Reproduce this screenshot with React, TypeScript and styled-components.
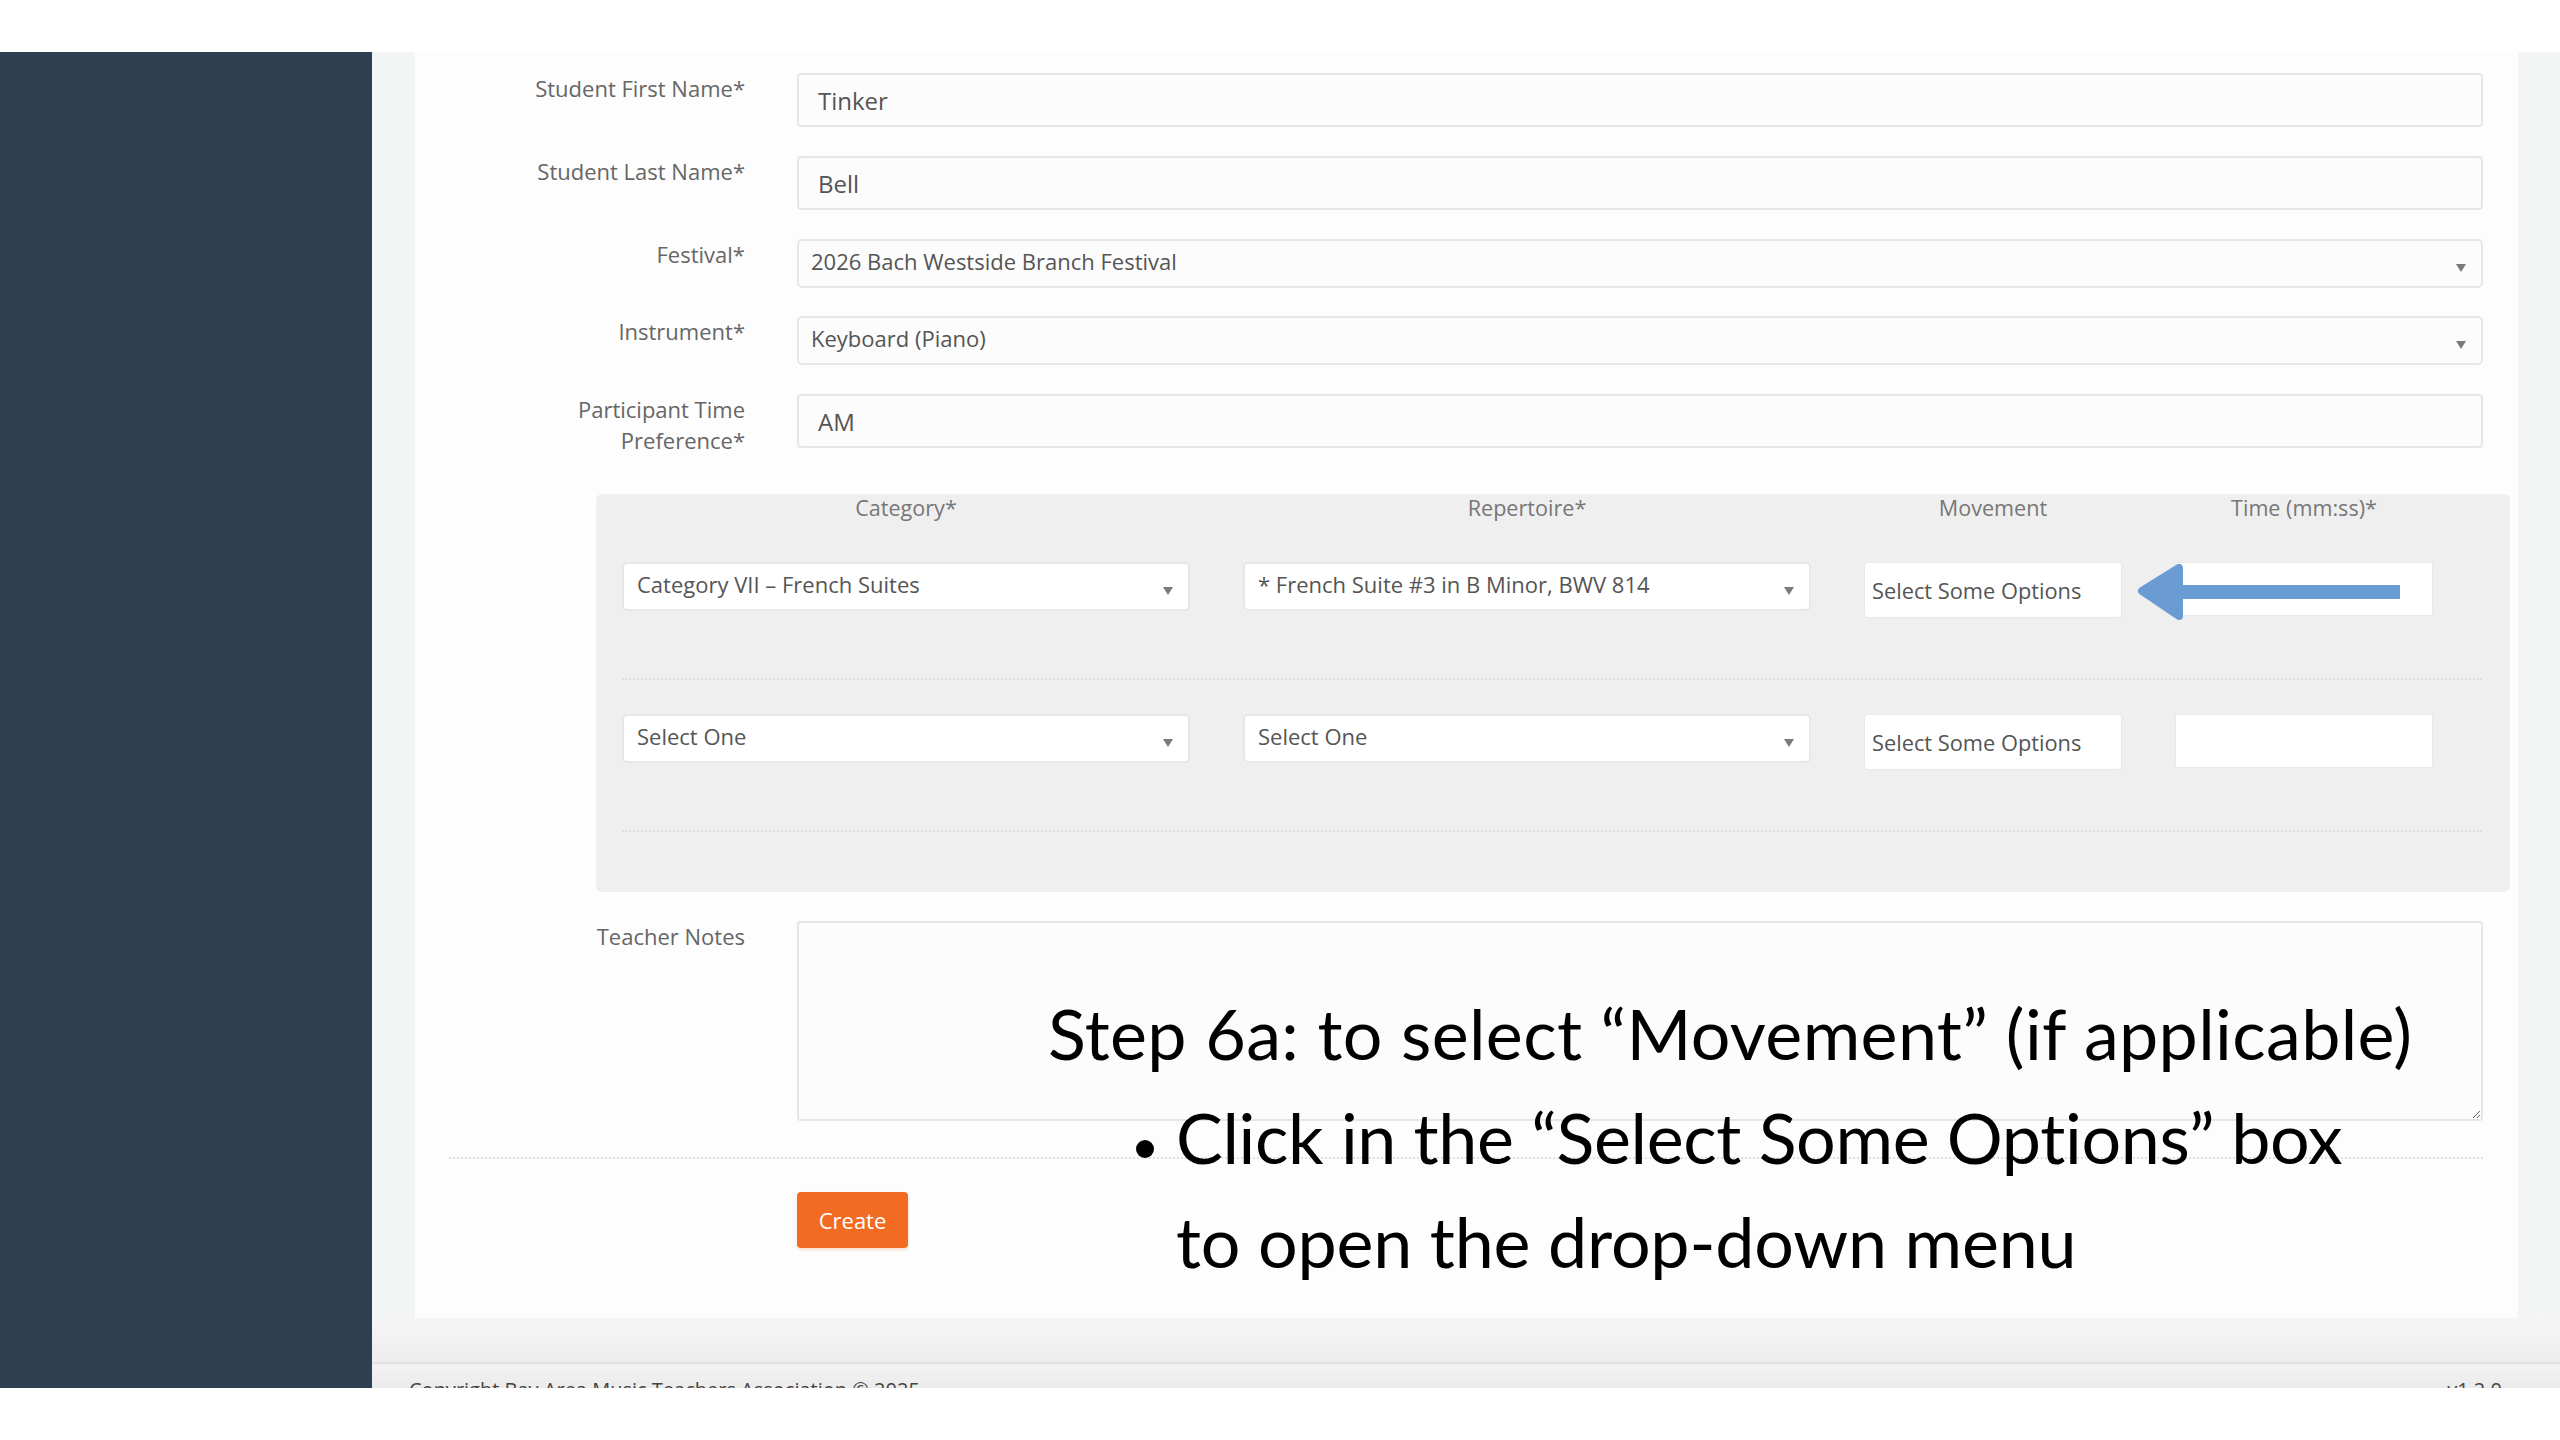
import React from "react";
import styled, { createGlobalStyle } from "styled-components";

const GlobalStyle = createGlobalStyle`
  html, body { margin: 0; padding: 0; background: #ffffff; }
  body { font-family: "Open Sans", "Liberation Sans", sans-serif; }
  *, *::before, *::after { box-sizing: border-box; }
`;

const Slide = styled.div`
  position: relative;
  width: 2560px;
  height: 1440px;
  background: #ffffff;
  padding-top: 52px;
  overflow: hidden;
`;

const Window = styled.div`
  display: flex;
  height: 1336px;
  overflow: hidden;
`;

const Sidebar = styled.aside`
  width: 372px;
  flex-shrink: 0;
  background: #2d3f50;
`;

const Main = styled.main`
  flex: 1;
  min-width: 0;
  display: flex;
  flex-direction: column;
  background: #f3f4f4;
`;

const CardWrap = styled.div`
  flex-shrink: 0;
  padding: 0 42px 0 43px;
`;

const Card = styled.section`
  height: 1266px;
  background: #fdfdfd;
  padding: 21px 35px 0 34px;
  display: flex;
  flex-direction: column;
`;

const FieldRow = styled.div<{ $gap?: number; $top?: number }>`
  display: grid;
  grid-template-columns: 296px 1fr;
  column-gap: 52px;
  align-items: start;
  margin-top: ${(p) => p.$top ?? 0}px;
  margin-bottom: ${(p) => p.$gap ?? 29}px;
`;

const Label = styled.label`
  font-size: 22px;
  line-height: 31px;
  color: #666666;
  text-align: right;
`;

const TextInput = styled.input`
  width: 100%;
  height: 54px;
  border: 2px solid #e6e6e6;
  border-radius: 4px;
  background: #fcfcfc;
  padding: 0 19px;
  font-family: "Open Sans", "Liberation Sans", sans-serif;
  font-size: 24px;
  color: #555555;
  outline: none;
`;

const SelectBox = styled.div<{ $bg?: string; $pad?: number }>`
  position: relative;
  height: 49px;
  border: 2px solid #e7e7e7;
  border-radius: 5px;
  background: ${(p) => p.$bg ?? "#fcfcfc"};
  padding: 0 40px 0 ${(p) => p.$pad ?? 12}px;
  display: flex;
  align-items: center;
  font-size: 22px;
  color: #555555;
  white-space: nowrap;
  overflow: hidden;
`;

const SelectText = styled.span`
  margin-top: -6px;
`;

const Caret = styled.span`
  position: absolute;
  right: 15px;
  top: 50%;
  width: 0;
  height: 0;
  border-left: 5px solid transparent;
  border-right: 5px solid transparent;
  border-top: 8px solid #7a7a7a;
`;

const Panel = styled.div`
  margin: 9px -27px 0 147px;
  background: #efefef;
  border-radius: 6px;
  padding: 0 28px 60px 26px;
`;

const RepGrid = styled.div`
  display: grid;
  grid-template-columns: 568px 568px 258px 258px;
  column-gap: 53px;
  align-items: start;
`;

const HeaderGrid = styled(RepGrid)`
  height: 28px;
  margin-bottom: 40px;
`;

const ColHead = styled.div`
  font-size: 21.6px;
  line-height: 28px;
  color: #777777;
  text-align: center;
`;

const RepRow = styled.div<{ $first?: boolean }>`
  height: 118px;
  margin-top: ${(p) => (p.$first ? 0 : 34)}px;
  border-bottom: 2px dotted #dddddd;
`;

const MultiBox = styled.div`
  height: 56px;
  background: #ffffff;
  border: 1px solid #e8e8e8;
  border-radius: 4px;
  padding: 0 7px;
  display: flex;
  align-items: center;
  font-size: 21.8px;
  color: #555555;
  white-space: nowrap;
`;

const TimeBox = styled.div`
  height: 54px;
  background: #ffffff;
  border: 1px solid #e8e8e8;
  border-radius: 3px;
`;

const NotesArea = styled.textarea`
  width: 100%;
  height: 200px;
  border: 2px solid #e6e6e6;
  border-radius: 3px;
  background: #fcfcfc;
  resize: vertical;
  font-family: "Open Sans", "Liberation Sans", sans-serif;
  font-size: 22px;
  outline: none;
`;

const Divider = styled.hr`
  margin: 36px 0 0 0;
  border: none;
  border-top: 2px dotted #e0e0e0;
  height: 0;
`;

const ButtonRow = styled.div`
  margin-top: 33px;
  padding-left: 348px;
`;

const CreateButton = styled.button`
  width: 111px;
  height: 56px;
  background: #f26b22;
  border: none;
  border-radius: 4px;
  color: #ffffff;
  font-family: "Open Sans", "Liberation Sans", sans-serif;
  font-size: 22px;
  box-shadow: 0 2px 3px rgba(242, 107, 34, 0.2);
`;

const FooterShade = styled.div`
  flex-shrink: 0;
  height: 44px;
  background: linear-gradient(#f5f5f5, #ededed);
`;

const FooterBar = styled.footer`
  flex: 1;
  min-height: 0;
  overflow: hidden;
  border-top: 2px solid #e2e2e2;
  background: linear-gradient(#f3f3f3, #ebebeb);
  padding: 12px 58px 0 37px;
  display: flex;
  justify-content: space-between;
  font-size: 20px;
  line-height: 28px;
  color: #444444;
`;

const Annotation = styled.div`
  position: absolute;
  left: 1048px;
  top: 981px;
  font-family: Lato, "Open Sans", sans-serif;
  font-size: 70px;
  line-height: 104px;
  color: #000000;
  white-space: nowrap;
`;

const AnnoLine = styled.div<{ $indent?: number; $spacing?: number }>`
  padding-left: ${(p) => p.$indent ?? 0}px;
  letter-spacing: ${(p) => p.$spacing ?? 0}px;
  display: flex;
  align-items: flex-start;
`;

const Bullet = styled.span`
  width: 18px;
  height: 18px;
  margin: 55px 22px 0 0;
  border-radius: 50%;
  background: #000000;
  flex-shrink: 0;
`;

const ArrowSvg = styled.svg`
  position: absolute;
  left: 2130px;
  top: 556px;
`;

function Select({ text, bg, pad }: { text: string; bg?: string; pad?: number }) {
  return (
    <SelectBox $bg={bg} $pad={pad}>
      <SelectText>{text}</SelectText>
      <Caret />
    </SelectBox>
  );
}

const rows = [
  { category: "Category VII – French Suites", repertoire: "* French Suite #3 in B Minor, BWV 814" },
  { category: "Select One", repertoire: "Select One" },
];

export default function App() {
  return (
    <>
      <GlobalStyle />
      <Slide>
        <Window>
          <Sidebar />
          <Main>
            <CardWrap>
              <Card>
                <FieldRow>
                  <Label>Student First Name*</Label>
                  <TextInput readOnly value="Tinker" />
                </FieldRow>
                <FieldRow $gap={29}>
                  <Label>Student Last Name*</Label>
                  <TextInput readOnly value="Bell" />
                </FieldRow>
                <FieldRow $gap={28}>
                  <Label>Festival*</Label>
                  <Select text="2026 Bach Westside Branch Festival" />
                </FieldRow>
                <FieldRow>
                  <Label>Instrument*</Label>
                  <Select text="Keyboard (Piano)" />
                </FieldRow>
                <FieldRow>
                  <Label>
                    Participant Time
                    <br />
                    Preference*
                  </Label>
                  <TextInput readOnly value="AM" />
                </FieldRow>
                <Panel>
                  <HeaderGrid>
                    <ColHead>Category*</ColHead>
                    <ColHead>Repertoire*</ColHead>
                    <ColHead>Movement</ColHead>
                    <ColHead>Time (mm:ss)*</ColHead>
                  </HeaderGrid>
                  {rows.map((r, i) => (
                    <RepRow key={i} $first={i === 0}>
                      <RepGrid>
                        <Select text={r.category} bg="#ffffff" pad={13} />
                        <Select text={r.repertoire} bg="#ffffff" pad={13} />
                        <MultiBox>Select Some Options</MultiBox>
                        <TimeBox />
                      </RepGrid>
                    </RepRow>
                  ))}
                </Panel>
                <FieldRow $gap={0} $top={29}>
                  <Label>Teacher Notes</Label>
                  <NotesArea readOnly />
                </FieldRow>
                <Divider />
                <ButtonRow>
                  <CreateButton>Create</CreateButton>
                </ButtonRow>
              </Card>
            </CardWrap>
            <FooterShade />
            <FooterBar>
              <span>Copyright Bay Area Music Teachers Association © 2025</span>
              <span>v1.2.0</span>
            </FooterBar>
          </Main>
        </Window>

        <ArrowSvg width="280" height="72" viewBox="0 0 280 72">
          <rect x="40" y="29" width="230" height="14" fill="#6a9bd3" />
          <polygon
            points="12,35 49,12 49,60"
            fill="#6a9bd3"
            stroke="#6a9bd3"
            strokeWidth="8"
            strokeLinejoin="round"
          />
        </ArrowSvg>

        <Annotation>
          <AnnoLine $spacing={0.35}>Step 6a: to select “Movement” (if applicable)</AnnoLine>
          <AnnoLine $indent={88} $spacing={-0.35}>
            <Bullet />
            <span>Click in the “Select Some Options” box</span>
          </AnnoLine>
          <AnnoLine $indent={128} $spacing={-0.2}>to open the drop-down menu</AnnoLine>
        </Annotation>
      </Slide>
    </>
  );
}
